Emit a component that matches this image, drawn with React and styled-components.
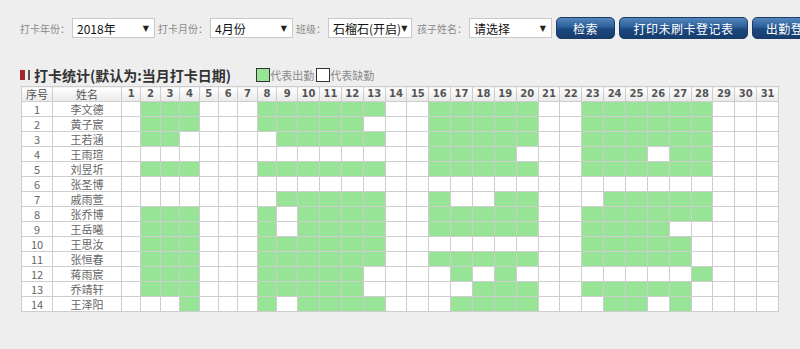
import React from 'react'
import styled, {createGlobalStyle} from 'styled-components'

const GlobalStyle = createGlobalStyle`
  html, body {
    margin: 0;
    padding: 0;
    background: #eeeeee;
    font-family: "Noto Sans CJK SC", "Liberation Sans", sans-serif;
  }
`

const Page = styled.div`
  width: 800px;
  height: 349px;
  overflow: hidden;
  padding: 17px 0 0 20px;
  box-sizing: border-box;
`

const Toolbar = styled.div`
  display: flex;
  align-items: center;
  height: 22px;
  white-space: nowrap;
  & > * {
    flex-shrink: 0;
  }
`

const Label = styled.span`
  font-size: 10px;
  color: #8a8a8a;
  margin: 0 2px 0 ${p => p.$gap || 0}px;
`

const Select = styled.div`
  width: ${p => p.$w || 83}px;
  height: 20px;
  box-sizing: border-box;
  background: #fff;
  border: 1px solid #c9c9c9;
  display: flex;
  align-items: center;
  justify-content: space-between;
  padding: 0 5px 0 4px;
  font-size: 12px;
  color: #111;
`

const Arrow = styled.span`
  font-size: 8px;
  color: #222;
  font-family: "DejaVu Sans", sans-serif;
`

const Button = styled.div`
  height: 22px;
  box-sizing: border-box;
  margin-left: 4px;
  width: ${p => p.$w}px;
  display: flex;
  align-items: center;
  justify-content: center;
  border: 1px solid #1b3c66;
  border-radius: 5px;
  background: linear-gradient(#5486bd 0%, #2c5f9a 45%, #1b4880 55%, #173d6c 100%);
  color: #fff;
  font-size: 12px;
  letter-spacing: 0.5px;
`

const TitleRow = styled.div`
  display: flex;
  align-items: center;
  margin-top: 28px;
  height: 16px;
`

const Mark = styled.span`
  display: inline-block;
  width: ${p => p.$w}px;
  height: 10px;
  background: ${p => p.$c};
  margin-right: ${p => p.$mr}px;
`

const Title = styled.span`
  font-size: 14px;
  font-weight: bold;
  color: #333;
  margin-left: 4px;
`

const LegendBox = styled.span`
  display: inline-block;
  width: 12px;
  height: 12px;
  border: 1px solid #333;
  background: ${p => (p.$on ? '#97e497' : '#fff')};
  margin-left: ${p => p.$ml}px;
`

const LegendText = styled.span`
  font-size: 11px;
  color: #8a8a8a;
`

const Table = styled.table`
  margin: 3px 0 0 1px;
  border-collapse: collapse;
  table-layout: fixed;
  width: 757px;
`

const Th = styled.th`
  height: 14px;
  padding: 0;
  border: 1px solid #cdcdcd;
  background: linear-gradient(#ffffff, #e9e9e9);
  font-family: ${p => (p.$cn ? '"Noto Sans CJK SC", sans-serif' : '"DejaVu Sans", sans-serif')};
  font-size: ${p => (p.$cn ? 11 : 10)}px;
  font-weight: ${p => (p.$cn ? 'normal' : 'bold')};
  color: #555;
  line-height: 14px;
  text-align: center;
`

const Td = styled.td`
  height: 14px;
  padding: 0;
  border: 1px solid #cdcdcd;
  background: ${p => (p.$on ? '#97e497' : '#fff')};
  font-size: 11px;
  line-height: 14px;
  color: #666;
  text-align: center;
  white-space: nowrap;
`

const range = (a, b) => Array.from({length: b - a + 1}, (_, i) => a + i)

const students = [
  ['李文德', [2, 3, 4, ...range(8, 13), ...range(16, 20), ...range(23, 28)]],
  ['黄子宸', [2, 3, 4, ...range(8, 12), ...range(16, 20), ...range(23, 28)]],
  ['王若涵', [2, 3, ...range(9, 13), ...range(16, 20), ...range(23, 28)]],
  ['王雨瑄', [...range(16, 19), 23, 24, 25, 27, 28]],
  ['刘昱圻', [2, 3, 4, ...range(8, 13), ...range(16, 20), ...range(23, 28)]],
  ['张圣博', []],
  ['戚雨萱', [...range(9, 13), 16, 19, 20, ...range(24, 28)]],
  ['张乔博', [2, 3, 4, 8, ...range(10, 13), ...range(16, 20), ...range(23, 28)]],
  ['王岳曦', [2, 3, 4, 8, ...range(10, 13), ...range(16, 20), ...range(23, 26)]],
  ['王思汝', [2, 3, 4, ...range(8, 13), ...range(23, 27)]],
  ['张恒春', [2, 3, 4, ...range(8, 13), ...range(16, 20), ...range(23, 27)]],
  ['蒋雨宸', [2, 3, 4, ...range(8, 12), 17, 19, 28]],
  ['乔靖轩', [2, 3, 4, ...range(8, 12), 18, 19, 20, ...range(23, 27)]],
  ['王泽阳', [4, 8, ...range(10, 13), ...range(17, 20), 24, 25, 27]]
]

const days = range(1, 31)
const dayWidth = d => (d <= 8 ? 19.4 : d === 9 ? 21 : 21.86)

export default function App() {
  return (
    <Page>
      <GlobalStyle />
      <Toolbar>
        <Label>打卡年份：</Label>
        <Select>2018年<Arrow>▼</Arrow></Select>
        <Label $gap={3}>打卡月份：</Label>
        <Select>4月份<Arrow>▼</Arrow></Select>
        <Label $gap={3}>班级：</Label>
        <Select $w={84}>石榴石(开启)<Arrow>▼</Arrow></Select>
        <Label $gap={5}>孩子姓名：</Label>
        <Select>请选择<Arrow>▼</Arrow></Select>
        <Button $w={59}>检索</Button>
        <Button $w={129}>打印未刷卡登记表</Button>
        <Button $w={90}>出勤登记表</Button>
      </Toolbar>

      <TitleRow>
        <Mark $w={5} $c="#a3282a" $mr={3} />
        <Mark $w={2} $c="#555" $mr={0} />
        <Title>打卡统计(默认为:当月打卡日期)</Title>
        <LegendBox $on $ml={25} />
        <LegendText>代表出勤</LegendText>
        <LegendBox $ml={2} />
        <LegendText>代表缺勤</LegendText>
      </TitleRow>

      <Table>
        <colgroup>
          <col style={{width: '31px'}} />
          <col style={{width: '69px'}} />
          {days.map(d => (
            <col key={d} style={{width: `${dayWidth(d)}px`}} />
          ))}
        </colgroup>
        <thead>
          <tr>
            <Th $cn>序号</Th>
            <Th $cn>姓名</Th>
            {days.map(d => (
              <Th key={d}>{d}</Th>
            ))}
          </tr>
        </thead>
        <tbody>
          {students.map(([name, present], i) => (
            <tr key={name}>
              <Td>{i + 1}</Td>
              <Td>{name}</Td>
              {days.map(d => (
                <Td key={d} $on={present.includes(d)} />
              ))}
            </tr>
          ))}
        </tbody>
      </Table>
    </Page>
  )
}
